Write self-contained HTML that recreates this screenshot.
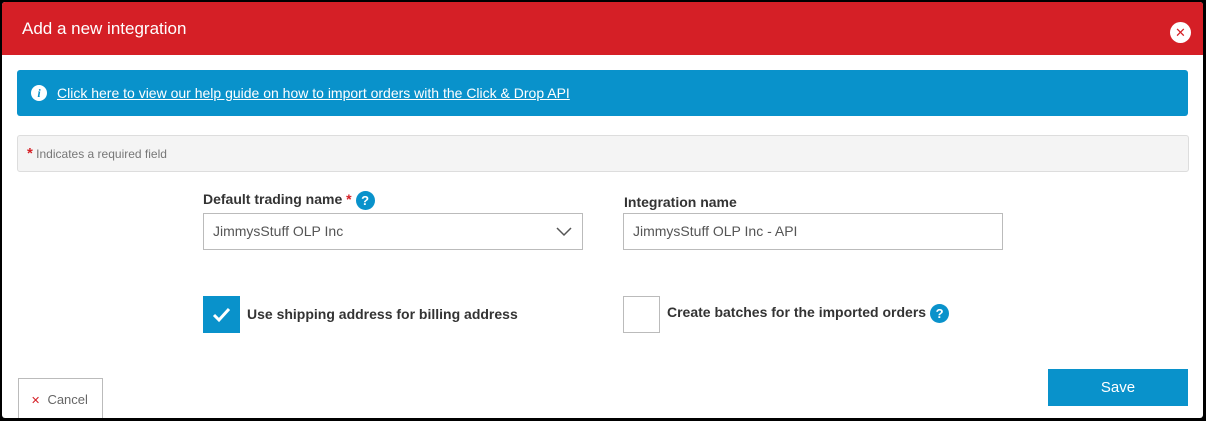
<!DOCTYPE html>
<html><head><style>
*{box-sizing:border-box;margin:0;padding:0}
body{width:1206px;height:421px;background:#000;font-family:"Liberation Sans",sans-serif;position:relative;overflow:hidden}
.modal{position:absolute;left:2px;top:2px;width:1201px;height:416px;background:#fff;border-radius:3px;overflow:hidden}
.hdr{position:absolute;left:0;top:0;width:100%;height:53px;background:#d51f26;color:#fff;font-size:17px;line-height:53px;padding-left:20px}
.close{position:absolute;right:12px;top:20px;width:21px;height:21px;border-radius:50%;background:#fff;color:#d51f26;font-size:13px;line-height:21px;text-align:center}
.info{position:absolute;left:15px;top:68px;width:1171px;height:46px;background:#0992cb;border-radius:3px;color:#fff;font-size:14px;line-height:46px;padding-left:40px;text-decoration:underline}
.info .i{position:absolute;left:14px;top:15px;width:16px;height:16px;border-radius:50%;background:#fff;color:#0992cb;font-weight:bold;font-size:12px;line-height:16px;text-align:center;font-family:"Liberation Serif",serif;font-style:italic}
.req{position:absolute;left:15px;top:133px;width:1172px;height:37px;background:#f4f4f4;border:1px solid #ddd;border-radius:3px;font-size:12px;color:#777;line-height:36px;padding-left:9px}
.req b{color:#d51f26;font-size:15px}
.lbl{position:absolute;font-size:14px;font-weight:bold;color:#333}
.q{display:inline-block;width:19px;height:19px;border-radius:50%;background:#0992cb;color:#fff;text-align:center;line-height:19px;font-size:13px;vertical-align:middle;margin-left:4px}
.inp{position:absolute;height:37px;border:1px solid #bbb;font-size:14px;color:#555;line-height:35px;padding-left:9px}
.cb{position:absolute;width:37px;height:37px}
.btn{position:absolute}
</style></head><body>
<div class="modal">
<div class="hdr">Add a new integration<div class="close">✕</div></div>
<div class="info"><span class="i">i</span>Click here to view our help guide on how to import orders with the Click &amp; Drop API</div>
<div class="req"><b>*</b> Indicates a required field</div>
<div class="lbl" style="left:201px;top:189px">Default trading name <span style="color:#d51f26">*</span><span class="q">?</span></div>
<div class="inp" style="left:201px;top:211px;width:380px">JimmysStuff OLP Inc
<svg style="position:absolute;right:10px;top:13px" width="16" height="10" viewBox="0 0 16 10"><path d="M1 1 L8 8 L15 1" fill="none" stroke="#555" stroke-width="1.5"/></svg></div>
<div class="lbl" style="left:622px;top:192px">Integration name</div>
<div class="inp" style="left:621px;top:211px;width:380px">JimmysStuff OLP Inc - API</div>
<div class="cb" style="left:201px;top:294px;background:#0992cb"><svg width="37" height="37"><path d="M11 19 L16 24 L26 13" fill="none" stroke="#fff" stroke-width="3"/></svg></div>
<div class="lbl" style="left:245px;top:304px">Use shipping address for billing address</div>
<div class="cb" style="left:621px;top:294px;border:1px solid #bbb"></div>
<div class="lbl" style="left:665px;top:302px">Create batches for the imported orders<span class="q">?</span></div>
<div class="btn" style="left:16px;top:376px;width:85px;height:50px;border:1px solid #bbb;font-size:13px;color:#666;line-height:42px;padding-left:12px"><span style="color:#d51f26;font-size:11px">✕</span>&nbsp; Cancel</div>
<div class="btn" style="left:1046px;top:367px;width:140px;height:37px;background:#0992cb;color:#fff;font-size:15px;line-height:37px;text-align:center">Save</div>
</div>
</body></html>
